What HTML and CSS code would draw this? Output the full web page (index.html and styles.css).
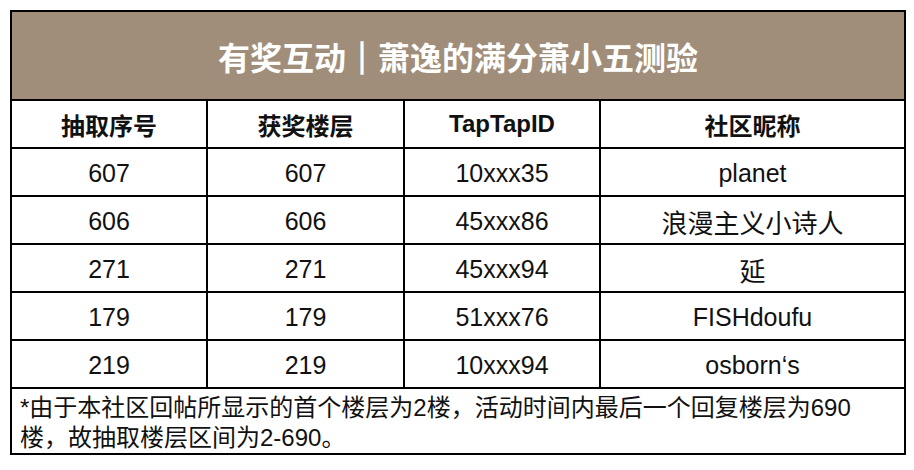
FILE: index.html
```html
<!DOCTYPE html>
<html lang="zh-CN">
<head>
<meta charset="utf-8">
<title>有奖互动</title>
<link rel="stylesheet" href="styles.css">
</head>
<body>
<table class="sheet">
  <colgroup>
    <col class="c1"><col class="c2"><col class="c3"><col class="c4">
  </colgroup>
  <tr class="title-row"><td colspan="4" class="title">有奖互动<span class="bar">｜</span>萧逸的满分萧小五测验</td></tr>
  <tr class="head-row">
    <th>抽取序号</th><th>获奖楼层</th><th class="latin">TapTapID</th><th>社区昵称</th>
  </tr>
  <tr class="data-row"><td>607</td><td>607</td><td>10xxx35</td><td>planet</td></tr>
  <tr class="data-row"><td>606</td><td>606</td><td>45xxx86</td><td class="cjk">浪漫主义小诗人</td></tr>
  <tr class="data-row"><td>271</td><td>271</td><td>45xxx94</td><td class="cjk">延</td></tr>
  <tr class="data-row"><td>179</td><td>179</td><td>51xxx76</td><td>FISHdoufu</td></tr>
  <tr class="data-row"><td>219</td><td>219</td><td>10xxx94</td><td>osborn‘s</td></tr>
  <tr class="note-row"><td colspan="4" class="note">*由于本社区回帖所显示的首个楼层为2楼，活动时间内最后一个回复楼层为690楼，故抽取楼层区间为2-690。</td></tr>
</table>
</body>
</html>
```
FILE: styles.css
```css
html, body {
  margin: 0;
  padding: 0;
  background: #ffffff;
}
body {
  padding: 10px;
  font-family: "Liberation Sans", "Noto Sans CJK SC", sans-serif;
  color: #111;
}
.sheet {
  border-collapse: collapse;
  table-layout: fixed;
  width: 894px;
  border: 2px solid #000;
}
.c1 { width: 196px; }
.c2 { width: 197px; }
.c3 { width: 196px; }
.c4 { width: 305px; }
.sheet td, .sheet th {
  border: 2px solid #000;
  text-align: center;
  padding: 0;
}
.title {
  background: #a08e7b;
  color: #ffffff;
  font-family: "Noto Sans CJK SC", sans-serif;
  font-weight: 700;
  font-size: 32px;
  height: 87px;
  padding-top: 4px;
}
.bar {
  -webkit-text-stroke: 1.5px #ffffff;
}
.head-row th {
  height: 46px;
  font-size: 24px;
  font-weight: 700;
  font-family: "Noto Sans CJK SC", sans-serif;
}
.head-row th.latin {
  font-family: "Liberation Sans", sans-serif;
}
.data-row td {
  height: 44px;
  font-size: 25px;
  padding-top: 2px;
}
.data-row td.cjk {
  font-size: 26px;
}
.note {
  text-align: left !important;
  font-size: 24px;
  line-height: 30px;
  padding: 4px 8px 0 8px !important;
}
```
